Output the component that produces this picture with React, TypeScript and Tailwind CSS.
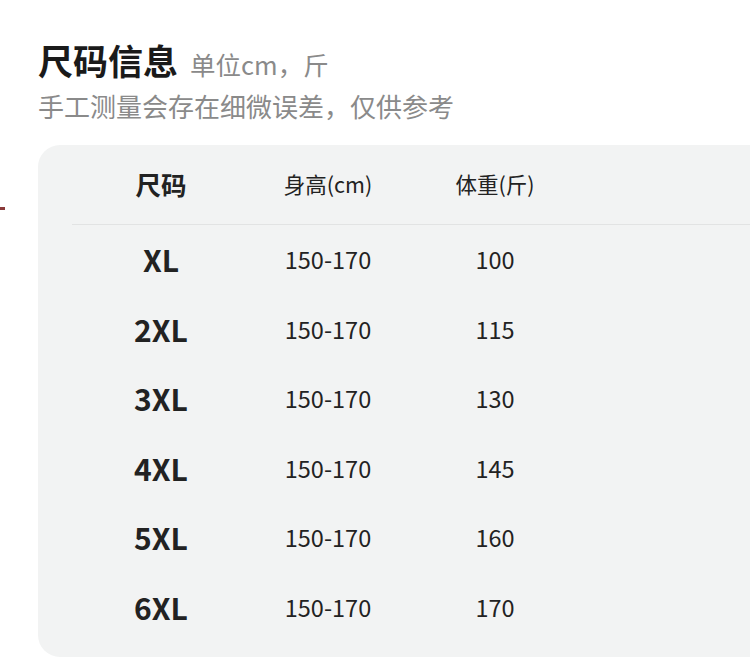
import React from "react";

const rows = [
  { size: "XL", height: "150-170", weight: "100" },
  { size: "2XL", height: "150-170", weight: "115" },
  { size: "3XL", height: "150-170", weight: "130" },
  { size: "4XL", height: "150-170", weight: "145" },
  { size: "5XL", height: "150-170", weight: "160" },
  { size: "6XL", height: "150-170", weight: "170" },
];

const App = () => {
  return (
    <div
      className="w-[750px] h-[665px] overflow-hidden bg-white"
      style={{ fontFamily: '"Noto Sans CJK SC", "Noto Sans", sans-serif' }}
    >
      <div className="pl-[38px] pt-[35px]">
        <div className="flex items-baseline gap-[12px]">
          <span className="text-[35px] leading-[50px] font-bold text-[#1a1a1a]">尺码信息</span>
          <span className="text-[25.5px] text-[#8a8a8a]">单位cm，斤</span>
        </div>
        <div className="mt-[2px] text-[26px] leading-[38px] text-[#8a8a8a]">
          手工测量会存在细微误差，仅供参考
        </div>
      </div>

      <div className="flex mt-[20px]">
        <div className="w-[38px] shrink-0 pt-[62px]">
          <div className="w-[5px] h-[3px] bg-[#8a3a3a]" />
        </div>
        <div className="w-[740px] shrink-0 rounded-[22px] bg-[#f2f3f3] text-[#222] pb-[15px]">
          <div className="grid grid-cols-[100px_234px_100px] pl-[73px] h-[79px] items-center">
            <div className="text-center text-[25.5px] font-bold">尺码</div>
            <div className="text-center text-[21.5px]">身高(cm)</div>
            <div className="text-center text-[21.5px]">体重(斤)</div>
          </div>
          <div className="ml-[34px] border-t border-[#e2e3e3]" />
          {rows.map((r) => (
            <div
              key={r.size}
              className="grid grid-cols-[100px_234px_100px] pl-[73px] h-[69.5px] items-center"
            >
              <div className="text-center text-[30px] font-bold">{r.size}</div>
              <div className="text-center text-[23.5px]">{r.height}</div>
              <div className="text-center text-[23.5px]">{r.weight}</div>
            </div>
          ))}
        </div>
      </div>
    </div>
  );
};

export default App;
